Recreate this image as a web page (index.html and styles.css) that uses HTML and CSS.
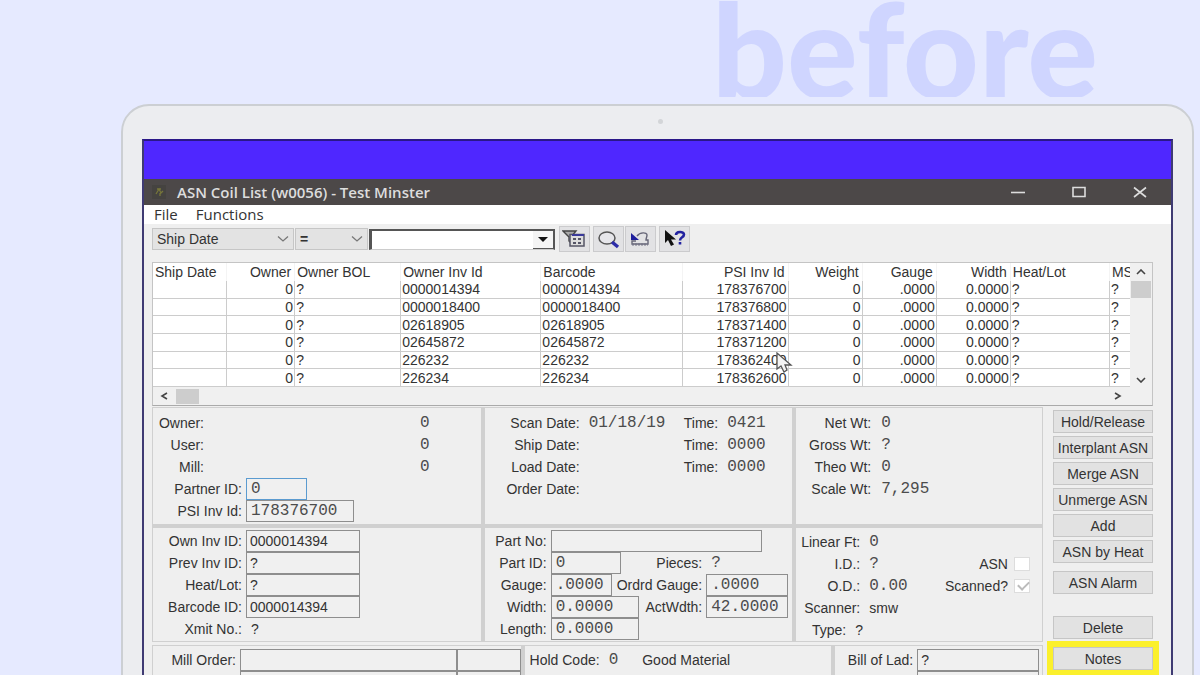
FILE: index.html
```html
<!DOCTYPE html>
<html lang="en">

<head>
    <meta charset="UTF-8">
    <meta name="viewport" content="width=device-width, initial-scale=1.0">
    <title>ASN Coil List</title>
    <link rel="stylesheet" href="styles.css">
</head>

<body>
    <h1 class="headline">before</h1>
    <div class="laptop">
        <span class="camera"></span>
        <div class="screen">
            <div class="desktop"></div>
            <div class="titlebar">
                <svg class="app-icon" width="14" height="14" viewBox="0 0 14 14">
                    <rect width="14" height="14" fill="#454340"/>
                    <path d="M4 9l3-5 2 4 2-2M5 4h4M8 8v3" stroke="#77763a" stroke-width="1.3" fill="none"/>
                </svg>
                <span class="title">ASN Coil List (w0056) - Test Minster</span>
                <button class="win-btn" aria-label="Minimize"><svg width="14" height="14" viewBox="0 0 14 14"><path d="M0 7.5h14"/></svg></button>
                <button class="win-btn" aria-label="Maximize"><svg width="14" height="14" viewBox="0 0 14 14"><path d="M1 2.5h12v9H1z"/></svg></button>
                <button class="win-btn" aria-label="Close"><svg width="14" height="14" viewBox="0 0 14 14"><path d="M1 2.5l12 9.5M13 2.5L1 12"/></svg></button>
            </div>
            <nav class="menu">
                <a href="#">File</a>
                <a href="#">Functions</a>
            </nav>
            <div class="window">
                <div class="toolbar">
                    <div class="picker picker-field">
                        <select aria-label="Field"><option>Ship Date</option></select>
                        <svg width="12" height="6" viewBox="0 0 12 6"><path d="M1 .5l5 4.5 5-4.5"/></svg>
                    </div>
                    <div class="picker picker-op">
                        <select aria-label="Operator"><option>=</option></select>
                        <svg width="12" height="6" viewBox="0 0 12 6"><path d="M1 .5l5 4.5 5-4.5"/></svg>
                    </div>
                    <div class="combo">
                        <input type="text" aria-label="Value">
                        <button aria-label="Open list"><svg width="10" height="5" viewBox="0 0 10 5"><path d="M0 0h10L5 5z" fill="#111"/></svg></button>
                    </div>
                    <div class="tools">
                        <button class="tool" aria-label="Filter">
                            <svg width="24" height="20" viewBox="0 0 24 20" fill="none">
                                <path d="M1 2h13L9 8v6L7 12V8z" fill="#aaa" stroke="#444" stroke-width="1.4"/>
                                <path d="M8 5.5h14V17H8z" fill="#ddd" stroke="#556" stroke-width="1.5"/>
                                <path d="M10 6h12" stroke="#3a3a9a" stroke-width="2"/>
                                <path d="M11 10h3M16 10h3M11 14h3M16 14h3" stroke="#556" stroke-width="1.8"/>
                            </svg>
                        </button>
                        <button class="tool" aria-label="Search">
                            <svg width="24" height="20" viewBox="0 0 24 20" fill="none">
                                <ellipse cx="11" cy="9" rx="8" ry="6" fill="#e6e6ea" stroke="#555" stroke-width="1.5"/>
                                <path d="M16 13l6 5" stroke="#2c2ca8" stroke-width="3.4"/>
                            </svg>
                        </button>
                        <button class="tool tool-joined" aria-label="Undo">
                            <svg width="24" height="20" viewBox="0 0 24 20" fill="none">
                                <path d="M9 7c3-4 10-4 10-1 0 2-1 3-1 5h2v4H4v-3h4" stroke="#667" stroke-width="1.4"/>
                                <path d="M3 4v7h8z" fill="#1e1e9c"/>
                                <path d="M4 15.5h16" stroke="#778" stroke-width="2" stroke-dasharray="2 1"/>
                            </svg>
                        </button>
                        <button class="tool" aria-label="Context help">
                            <svg width="24" height="20" viewBox="0 0 24 20" fill="none">
                                <path d="M3 1v13l3-3 3 6 3-1.5-3-5h5z" fill="#111"/>
                                <path d="M14 6c0-4 8-4 8-.5 0 3-4 2.500-4 6M18 13v2.500" stroke="#2222a0" stroke-width="2.6"/>
                            </svg>
                        </button>
                    </div>
                </div>

                <div class="list">
                    <table class="coils">
                        <colgroup>
                            <col class="c-date"><col class="c-owner"><col class="c-bol"><col class="c-inv"><col class="c-barcode">
                            <col class="c-psi"><col class="c-num"><col class="c-num"><col class="c-num"><col class="c-heat"><col class="c-ms">
                        </colgroup>
                        <thead>
                            <tr><th>Ship Date</th><th class="r">Owner</th><th>Owner BOL</th><th>Owner Inv Id</th><th>Barcode</th><th class="r">PSI Inv Id</th><th class="r">Weight</th><th class="r">Gauge</th><th class="r">Width</th><th>Heat/Lot</th><th>MS</th></tr>
                        </thead>
                        <tbody>
                            <tr><td></td><td class="r">0</td><td>?</td><td>0000014394</td><td>0000014394</td><td class="r">178376700</td><td class="r">0</td><td class="r">.0000</td><td class="r">0.0000</td><td>?</td><td>?</td></tr>
                            <tr><td></td><td class="r">0</td><td>?</td><td>0000018400</td><td>0000018400</td><td class="r">178376800</td><td class="r">0</td><td class="r">.0000</td><td class="r">0.0000</td><td>?</td><td>?</td></tr>
                            <tr><td></td><td class="r">0</td><td>?</td><td>02618905</td><td>02618905</td><td class="r">178371400</td><td class="r">0</td><td class="r">.0000</td><td class="r">0.0000</td><td>?</td><td>?</td></tr>
                            <tr><td></td><td class="r">0</td><td>?</td><td>02645872</td><td>02645872</td><td class="r">178371200</td><td class="r">0</td><td class="r">.0000</td><td class="r">0.0000</td><td>?</td><td>?</td></tr>
                            <tr><td></td><td class="r">0</td><td>?</td><td>226232</td><td>226232</td><td class="r">178362400</td><td class="r">0</td><td class="r">.0000</td><td class="r">0.0000</td><td>?</td><td>?</td></tr>
                            <tr><td></td><td class="r">0</td><td>?</td><td>226234</td><td>226234</td><td class="r">178362600</td><td class="r">0</td><td class="r">.0000</td><td class="r">0.0000</td><td>?</td><td>?</td></tr>
                        </tbody>
                    </table>
                    <div class="vscroll">
                        <svg width="10" height="6" viewBox="0 0 10 6"><path d="M1 5l4-4 4 4"/></svg>
                        <span class="thumb"></span>
                        <svg class="down" width="10" height="6" viewBox="0 0 10 6"><path d="M1 1l4 4 4-4"/></svg>
                    </div>
                    <div class="hscroll">
                        <svg width="8" height="8" viewBox="0 0 8 8"><path d="M7 1L2 4l5 3"/></svg>
                        <span class="thumb"></span>
                        <svg class="next" width="8" height="8" viewBox="0 0 8 8"><path d="M1 1l5 3-5 3"/></svg>
                    </div>
                    <svg class="pointer" width="17" height="22" viewBox="0 0 17 22"><path d="M1 1v16l4-3 3 6 3-2-2-5h6z" fill="#f4f4f4" stroke="#555" stroke-width="1.3"/></svg>
                </div>

                <div class="details">
                    <div class="forms">
                        <div class="panels">
                            <div class="panel owner">
                                <div class="row short"><span class="label">Owner:</span><span class="value">0</span></div>
                                <div class="row short"><span class="label">User:</span><span class="value">0</span></div>
                                <div class="row short"><span class="label">Mill:</span><span class="value">0</span></div>
                                <div class="row"><label for="partner">Partner ID:</label><input class="w-s focus" id="partner" value="0"></div>
                                <div class="row"><label for="psi">PSI Inv Id:</label><input class="w-m" id="psi" value="178376700"></div>
                            </div>
                            <div class="panel dates">
                                <div class="row"><span class="label">Scan Date:</span><span class="value">01/18/19</span><span class="pair">Time:<span class="value">0421</span></span></div>
                                <div class="row"><span class="label">Ship Date:</span><span class="pair">Time:<span class="value">0000</span></span></div>
                                <div class="row"><span class="label">Load Date:</span><span class="pair">Time:<span class="value">0000</span></span></div>
                                <div class="row"><span class="label">Order Date:</span></div>
                            </div>
                            <div class="panel weights">
                                <div class="row"><span class="label">Net Wt:</span><span class="value">0</span></div>
                                <div class="row"><span class="label">Gross Wt:</span><span class="value">?</span></div>
                                <div class="row"><span class="label">Theo Wt:</span><span class="value">0</span></div>
                                <div class="row"><span class="label">Scale Wt:</span><span class="value">7,295</span></div>
                            </div>
                            <div class="panel ids">
                                <div class="row"><label for="own">Own Inv ID:</label><input class="plain w-l" id="own" value="0000014394"></div>
                                <div class="row"><label for="prev">Prev Inv ID:</label><input class="plain w-l" id="prev" value="?"></div>
                                <div class="row"><label for="heat">Heat/Lot:</label><input class="plain w-l" id="heat" value="?"></div>
                                <div class="row"><label for="barcode">Barcode ID:</label><input class="plain w-l" id="barcode" value="0000014394"></div>
                                <div class="row"><span class="label">Xmit No.:</span><span class="text">?</span></div>
                            </div>
                            <div class="panel part">
                                <div class="row"><label for="partno">Part No:</label><input class="w-xl" id="partno"></div>
                                <div class="row"><label for="partid">Part ID:</label><input class="w-70" id="partid" value="0"><span class="pair">Pieces:<span class="value">?</span></span></div>
                                <div class="row"><label for="gauge">Gauge:</label><input class="w-s" id="gauge" value=".0000"><span class="pair"><label for="ordrd">Ordrd Gauge:</label><input id="ordrd" value=".0000"></span></div>
                                <div class="row"><label for="width">Width:</label><input class="w-88" id="width" value="0.0000"><span class="pair"><label for="act">ActWdth:</label><input id="act" value="42.0000"></span></div>
                                <div class="row"><label for="length">Length:</label><input class="w-88" id="length" value="0.0000"></div>
                            </div>
                            <div class="panel scan">
                                <div class="row"><span class="label">Linear Ft:</span><span class="value">0</span></div>
                                <div class="row"><span class="label">I.D.:</span><span class="value">?</span><span class="check"><label for="asn">ASN</label><input type="checkbox" id="asn"></span></div>
                                <div class="row"><span class="label">O.D.:</span><span class="value">0.00</span><span class="check"><label for="scanned">Scanned?</label><input type="checkbox" id="scanned" checked></span></div>
                                <div class="row"><span class="label">Scanner:</span><span class="text">smw</span></div>
                                <div class="row type"><span class="label">Type:</span><span class="text">?</span></div>
                            </div>
                        </div>
                        <div class="panels bottom">
                            <div class="panel mill">
                                <div class="row"><label for="mill">Mill Order:</label><input class="grow" id="mill"><input class="w-64" aria-label="Mill order line"></div>
                                <div class="row"><span class="label"></span><input class="grow" aria-label="Mill reference"><input class="w-64" aria-label="Mill reference line"></div>
                            </div>
                            <div class="panel hold">
                                <div class="row"><span>Hold Code:</span><span class="value">0</span><span class="material">Good Material</span></div>
                            </div>
                            <div class="panel bill">
                                <div class="row"><label for="bill">Bill of Lad:</label><input class="plain grow" id="bill" value="?"></div>
                                <div class="row"><span class="label"></span><input class="plain grow" aria-label="Bill reference"></div>
                            </div>
                        </div>
                    </div>
                    <div class="actions">
                        <button>Hold/Release</button>
                        <button>Interplant ASN</button>
                        <button>Merge ASN</button>
                        <button>Unmerge ASN</button>
                        <button>Add</button>
                        <button>ASN by Heat</button>
                        <button class="alarm">ASN Alarm</button>
                        <button class="delete">Delete</button>
                        <button class="notes">Notes</button>
                    </div>
                </div>
            </div>
        </div>
    </div>
</body>

</html>
```
FILE: styles.css
```css
* {
    box-sizing: border-box;
}

body {
    margin: 0;
    height: 100vh;
    overflow: hidden;
    background: #e6eaff;
    color: #333;
    font-family: "Liberation Sans", Arial, sans-serif;
    font-size: 14px;
    line-height: 18px;
}

button, input, select {
    margin: 0;
    color: inherit;
    font: inherit;
    border-radius: 0;
}

svg {
    display: block;
    flex: none;
}

.headline {
    height: 97px;
    margin: 0 102px 7px;
    overflow: hidden;
    color: #cfd5ff;
    font: 900 132px/96px Lato, sans-serif;
    text-align: right;
}

/* laptop */
.laptop {
    position: relative;
    margin: 0 6px 0 121px;
    padding: 33px 19px 40px;
    background: #ecedf0;
    border: 2px solid #cccfd3;
    border-radius: 28px 28px 0 0;
}

.camera {
    position: absolute;
    top: 13px;
    left: 50%;
    width: 5px;
    height: 5px;
    border-radius: 50%;
    background: #d3d5d8;
}

.screen {
    background: #efefef;
    border: 2px solid #3f3b73;
    border-top-color: #2a1788;
}

.desktop {
    height: 38px;
    background: #4f27ff;
}

.titlebar {
    display: flex;
    align-items: center;
    height: 26px;
    padding: 0 24px 0 8px;
    background: #4c4848;
    color: #ddd;
    font: 600 15px/26px "Open Sans", sans-serif;
}

.title {
    margin-left: 11px;
    margin-right: auto;
}

.win-btn {
    margin-left: 47px;
    padding: 0;
    background: none;
    border: 0;
}

.win-btn svg {
    fill: none;
    stroke: #ddd;
    stroke-width: 1.6;
}

.menu {
    display: flex;
    gap: 18px;
    height: 19px;
    padding-left: 10px;
    background: #fff;
    font: 15px/19px "Open Sans", sans-serif;
}

.menu a {
    color: #333;
    text-decoration: none;
}

.window {
    padding: 2px 18px 0 8px;
}

/* toolbar */
.toolbar {
    display: flex;
    align-items: center;
    padding-bottom: 10px;
}

.picker {
    position: relative;
    margin-right: 1px;
}

.picker-field {
    width: 142px;
}

.picker-op {
    width: 73px;
    font-weight: bold;
}

.picker select {
    display: block;
    width: 100%;
    height: 22px;
    padding: 0 4px;
    appearance: none;
    background: #e3e3e3;
    border: 1px solid #c6c6c6;
}

.picker svg {
    position: absolute;
    top: 8px;
    right: 5px;
    pointer-events: none;
    fill: none;
    stroke: #777;
    stroke-width: 1.3;
}

.combo {
    display: flex;
    width: 186px;
    height: 21px;
    background: #fff;
    border: 2px solid #555;
    border-left-width: 3px;
    border-bottom: 1px solid #ccc;
}

.combo input {
    flex: 1;
    min-width: 0;
    padding: 0 4px;
    border: 0;
    outline: 0;
}

.combo button {
    width: 20px;
    padding: 0 0 0 5px;
    background: #f4f4f4;
    border: 0;
    border-bottom: 1px solid #555;
}

.tools {
    display: flex;
    gap: 3px;
    margin-left: 4px;
}

.tool {
    width: 31px;
    height: 26px;
    padding: 0 2px;
    background: #e2e2e4;
    border: 1px solid #cbcbcd;
}

.tool-joined {
    margin-left: -2px;
}

/* coil list */
.list {
    position: relative;
    display: grid;
    grid-template-columns: 1fr 22px;
    border: 1px solid #c4c4c4;
    border-bottom-color: #aaa;
}

.coils {
    width: 100%;
    height: 124px;
    table-layout: fixed;
    border-collapse: separate;
    border-spacing: 0;
    background: #fff;
    line-height: 16px;
}

.coils th, .coils td {
    padding: 0 2px 0 1px;
    overflow: hidden;
    border-right: 1px solid #ccc;
    text-align: left;
    font-weight: normal;
    white-space: nowrap;
}

.coils th {
    height: 18px;
    padding: 0 3px 0 2px;
    border-color: #f4f4f4;
}

.coils td {
    border-bottom: 1px solid #ccc;
}

.coils .r {
    padding-right: 1px;
    text-align: right;
}

.coils th.r {
    padding-right: 3px;
}

.coils th:last-child, .coils td:last-child {
    padding-right: 0;
    border-right: 0;
}

.c-date { width: 74px; }
.c-owner { width: 68px; }
.c-bol { width: 106px; }
.c-inv { width: 140px; }
.c-barcode { width: 141px; }
.c-psi { width: 106px; }
.c-num { width: 74px; }
.c-heat { width: 99px; }
.c-ms { width: 20px; }

.list > div svg {
    fill: none;
    stroke: #444;
    stroke-width: 1.6;
}

.vscroll {
    display: flex;
    flex-direction: column;
    align-items: center;
    padding: 6px 0 4px;
    background: #f0f0f0;
}

.vscroll .thumb {
    width: 20px;
    height: 17px;
    margin: 6px 0 auto;
    background: #cdcdcd;
}

.hscroll {
    display: flex;
    align-items: center;
    grid-column: 1 / 3;
    height: 18px;
    padding: 0 30px 0 7px;
    background: #f0f0f0;
}

.hscroll .thumb {
    width: 23px;
    height: 15px;
    margin: 0 auto 0 8px;
    background: #cdcdcd;
}

.pointer {
    position: absolute;
    top: 89px;
    left: 623px;
}

/* detail form */
.details {
    display: grid;
    grid-template-columns: 1fr 100px;
    gap: 10px;
    padding-top: 1px;
}

.panels {
    display: grid;
    grid-template-columns: 328fr 308fr 246fr;
    gap: 4px;
    padding: 1px;
    background: #d0d0d0;
}

.panel {
    min-width: 0;
    background: #efefef;
}

.owner, .dates, .weights {
    padding: 4px 0 2px;
}

.ids, .part, .scan {
    padding: 2px 0 0;
}

.row {
    display: flex;
    align-items: center;
    height: 22px;
    white-space: nowrap;
}

.row > label, .label {
    flex: none;
    width: 89px;
    margin-right: 4px;
    text-align: right;
}

.row input {
    height: 22px;
    min-width: 0;
    padding: 0 4px;
    background: #f0f0f0;
    border: 1px solid #8e8e8e;
    color: #4c4c4c;
    font-family: "Liberation Mono", monospace;
    font-size: 16px;
}

.row input.plain {
    padding: 0 3px;
    color: #333;
    font-family: inherit;
    font-size: 14px;
}

.row input.focus {
    border-color: #5b9bd0;
}

.value {
    padding-left: 5px;
    color: #4c4c4c;
    font-family: "Liberation Mono", monospace;
    font-size: 16px;
}

.text {
    padding-left: 5px;
}

.w-s { width: 61px; }
.w-64 { width: 64px; }
.w-70 { width: 70px; }
.w-88 { width: 88px; }
.w-m { width: 108px; }
.w-l { width: 114px; }
.w-xl { width: 211px; }
.grow { flex: 1; }

.short .label {
    width: 51px;
}

.short .value {
    margin-left: auto;
    padding-right: 51px;
}

.pair {
    display: flex;
    align-items: center;
    gap: 4px;
    margin-left: auto;
}

.pair .value {
    width: 70px;
}

.dates .label {
    width: 95px;
}

.weights .label {
    width: 75px;
    margin-right: 5px;
}

.part .row > label {
    width: 62px;
}

.part .pair {
    padding-right: 4px;
}

.part .pair input, .part .pair .value {
    width: 82px;
}

.scan {
    padding-top: 3px;
}

.scan .label {
    width: 64px;
}

.scan .type .label {
    width: 50px;
}

.check {
    display: flex;
    align-items: center;
    gap: 6px;
    margin-left: auto;
    padding-right: 12px;
}

.row .check input {
    position: relative;
    width: 16px;
    height: 14px;
    padding: 0;
    appearance: none;
    background: #fff;
    border-color: #ddd;
}

.check input:checked::after {
    content: "";
    position: absolute;
    top: 1px;
    left: 3px;
    width: 9px;
    height: 5px;
    border: solid #bbb;
    border-width: 0 0 2px 2px;
    transform: rotate(-45deg);
}

.bottom {
    grid-template-columns: 368fr 307fr 207fr;
    margin-top: 3px;
}

.bottom .panel {
    padding: 3px 0;
}

.mill .row > label, .mill .label {
    width: 83px;
}

.hold .row {
    gap: 4px;
    padding-left: 5px;
}

.material {
    margin-left: 20px;
}

.bill .row {
    padding-right: 3px;
}

.bill .row > label, .bill .label {
    width: 78px;
}

/* action buttons */
.actions {
    display: flex;
    flex-direction: column;
    gap: 3px;
    padding-top: 3px;
}

.actions button {
    height: 23px;
    padding: 0;
    background: #e2e2e2;
    border: 1px solid #c6c6c6;
    white-space: nowrap;
}

.actions .alarm {
    margin-top: 5px;
}

.actions .delete {
    margin-top: 19px;
}

.actions .notes {
    margin-top: 5px;
    box-shadow: 0 0 0 6px #fbf02c;
}
```
